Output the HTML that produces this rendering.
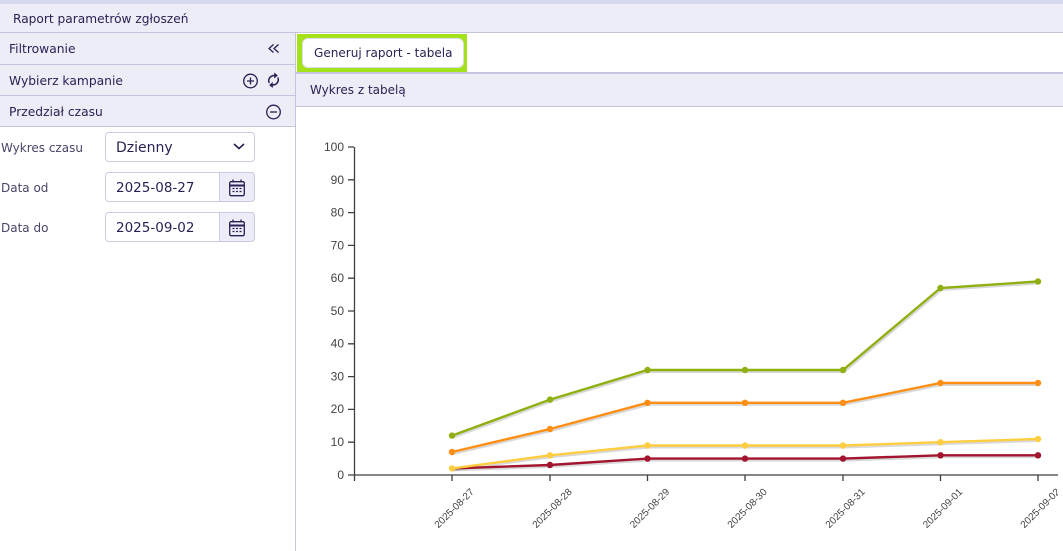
<!DOCTYPE html>
<html lang="pl"><head><meta charset="utf-8"><title>Raport</title>
<style>
html,body{margin:0;padding:0;background:#fff}
body{width:1063px;height:551px;position:relative;overflow:hidden;font-family:"DejaVu Sans","Liberation Sans",sans-serif;color:#2a1f52}
.a{position:absolute;box-sizing:border-box}
.t{position:absolute;white-space:nowrap;font-size:12.3px;line-height:16px}
.bar{background:#ecedf7;border-bottom:1px solid #c5c6de}
.lbl{color:#4a4468;font-size:12px}
.inp{background:#fff;border:1px solid #c9cae3;border-radius:4px}
.cal{background:#ecedf9;border:1px solid #c9cae3;border-left:1px solid #c9cae3;border-radius:0 4px 4px 0}
svg{position:absolute;overflow:visible}
</style></head><body>
<div class="a" style="left:0;top:0;width:1063px;height:4px;background:#d6d8ee"></div>
<div class="a bar" style="left:0;top:4px;width:1063px;height:29px"></div>
<div class="t" style="left:13px;top:11px;font-size:12.2px">Raport parametrów zgłoszeń</div>

<div class="a bar" style="left:0;top:33px;width:296px;height:32px"></div>
<div class="t" style="left:9px;top:41px">Filtrowanie</div>
<div class="a bar" style="left:0;top:65px;width:296px;height:31px"></div>
<div class="t" style="left:9px;top:73px">Wybierz kampanie</div>
<div class="a bar" style="left:0;top:96px;width:296px;height:31px"></div>
<div class="t" style="left:9px;top:104px">Przedział czasu</div>
<div class="a" style="left:295px;top:33px;width:1px;height:518px;background:#c5c6de"></div>

<svg style="left:0;top:0" width="296" height="130" fill="none" stroke="#2a1f52" stroke-width="1.3">
<path d="M273.5 44.5l-4.500 4 4.500 4M278.500 44.500l-4.500 4 4.500 4"/>
<circle cx="250.500" cy="81" r="6.800"/><path d="M250.500 77.500v7M247 81h7"/>
<circle cx="273.500" cy="112" r="6.800"/><path d="M270 112h7"/>
<path stroke-width="1.500" d="M269.200 83C267.500 79 270.500 75.500 274.500 75.500M277.800 77.500C279.500 81.500 276.500 85 272.500 85"/>
<path d="M274.200 72.500l3.600 3-3.600 3zM272.800 82l-3.600 3 3.600 3z" fill="#2a1f52" stroke="none"/>
</svg>

<div class="t lbl" style="left:1px;top:140px">Wykres czasu</div>
<div class="t lbl" style="left:1px;top:180px">Data od</div>
<div class="t lbl" style="left:1px;top:220px">Data do</div>

<div class="a inp" style="left:105px;top:132px;width:150px;height:30px"></div>
<div class="t" style="left:116px;top:140px;font-size:14px;line-height:17px">Dzienny</div>
<svg style="left:0;top:0" width="260" height="170" fill="none" stroke="#2a1f52" stroke-width="1.600"><path d="M234 144l5 4.500 5-4.500"/></svg>

<div class="a inp" style="left:105px;top:172px;width:150px;height:30px"></div>
<div class="a cal" style="left:219px;top:172px;width:36px;height:30px"></div>
<div class="t" style="left:116px;top:180px;font-size:13.500px">2025-08-27</div>
<div class="a inp" style="left:105px;top:212px;width:150px;height:30px"></div>
<div class="a cal" style="left:219px;top:212px;width:36px;height:30px"></div>
<div class="t" style="left:116px;top:220px;font-size:13.500px">2025-09-02</div>

<svg style="left:229px;top:179px" width="16" height="18" fill="none" stroke="#2a1f52" stroke-width="1.300">
<rect x=".7" y="2.700" width="14.600" height="14" rx="1.500"/><path d="M.7 6.500h14.600" stroke-width="2"/><path d="M4 .5v3M12 .5v3"/>
<path d="M3.500 9.500h2M7 9.500h2M10.500 9.500h2M3.500 12.500h2M7 12.500h2M10.500 12.500h2" stroke-width="1.200"/></svg>
<svg style="left:229px;top:219px" width="16" height="18" fill="none" stroke="#2a1f52" stroke-width="1.300">
<rect x=".7" y="2.700" width="14.600" height="14" rx="1.500"/><path d="M.7 6.500h14.600" stroke-width="2"/><path d="M4 .5v3M12 .5v3"/>
<path d="M3.500 9.500h2M7 9.500h2M10.500 9.500h2M3.500 12.500h2M7 12.500h2M10.500 12.500h2" stroke-width="1.200"/></svg>

<div class="a" style="left:296px;top:32px;width:767px;height:1px;background:#c5c6de"></div>
<div class="a" style="left:297px;top:34px;width:170px;height:38px;background:#a4e31c"></div>
<div class="a" style="left:302px;top:38px;width:162px;height:30px;background:#fff;border:1px solid #dcdcea;border-radius:6px"></div>
<div class="t" style="left:314px;top:45px;font-size:12.050px">Generuj raport - tabela</div>
<div class="a" style="left:296px;top:72px;width:767px;height:35px;background:#ecedf7;border-top:2px solid #c5c6de;border-bottom:1px solid #c5c6de"></div>
<div class="t" style="left:310px;top:82px;font-size:12px">Wykres z tabelą</div>

<svg style="left:0;top:0;overflow:hidden" width="1058" height="551" fill="none">
<g stroke="#3f3f3f" stroke-width="1.300">
<path d="M354.500 147v334M1063 475H354.500"/>
<path d="M348 147h6M348 179.800h6M348 212.600h6M348 245.400h6M348 278.200h6M348 311h6M348 343.800h6M348 376.600h6M348 409.400h6M348 442.200h6M348 475h6"/>
<path d="M452 475v6M550 475v6M647.500 475v6M745 475v6M843 475v6M940.500 475v6M1038 475v6"/>
</g>
<g font-family="Liberation Sans,Arial,sans-serif" font-size="12" fill="#444" text-anchor="end" stroke="none">
<text x="344" y="151">100</text><text x="344" y="184">90</text><text x="344" y="216.500">80</text><text x="344" y="249.500">70</text><text x="344" y="282">60</text><text x="344" y="315">50</text><text x="344" y="347.500">40</text><text x="344" y="380.500">30</text><text x="344" y="413">20</text><text x="344" y="446">10</text><text x="344" y="479">0</text>
</g>
<g font-family="Liberation Sans,Arial,sans-serif" font-size="10" fill="#444" text-anchor="end" stroke="none">
<text transform="translate(474.500,492.500) rotate(-45)">2025-08-27</text>
<text transform="translate(572.500,492.500) rotate(-45)">2025-08-28</text>
<text transform="translate(670,492.500) rotate(-45)">2025-08-29</text>
<text transform="translate(767.500,492.500) rotate(-45)">2025-08-30</text>
<text transform="translate(865.500,492.500) rotate(-45)">2025-08-31</text>
<text transform="translate(963,492.500) rotate(-45)">2025-09-01</text>
<text transform="translate(1060.500,492.500) rotate(-45)">2025-09-02</text>
</g>
<g stroke="#000" stroke-opacity=".15" stroke-width="3" transform="translate(1 1.500)">
<path d="M452 435.600L550 399.600 647.500 370H843L940.500 288 1038 281.500"/>
<path d="M452 452L550 429 647.500 402.800H843L940.500 383H1038"/>
<path d="M452 468.400L550 455.300 647.500 445.500H843L940.500 442.200 1038 439"/>
<path d="M452 468.400L550 465 647.500 458.600H843L940.500 455.300H1038"/>
</g>
<g stroke-width="2.400">
<path stroke="#8fb010" d="M452 435.600L550 399.600 647.500 370H843L940.500 288 1038 281.500"/>
<path stroke="#ff8f14" d="M452 452L550 429 647.500 402.800H843L940.500 383H1038"/>
<path stroke="#a3152e" d="M452 468.400L550 465 647.500 458.600H843L940.500 455.300H1038"/>
<path stroke="#ffcd40" d="M452 468.400L550 455.300 647.500 445.500H843L940.500 442.200 1038 439"/>
</g>
<g fill="#8fb010"><circle cx="452" cy="435.600" r="3.200"/><circle cx="550" cy="399.600" r="3.200"/><circle cx="647.500" cy="370" r="3.200"/><circle cx="745" cy="370" r="3.200"/><circle cx="843" cy="370" r="3.200"/><circle cx="940.500" cy="288" r="3.200"/><circle cx="1038" cy="281.500" r="3.200"/></g>
<g fill="#ff8f14"><circle cx="452" cy="452" r="3.200"/><circle cx="550" cy="429" r="3.200"/><circle cx="647.500" cy="402.800" r="3.200"/><circle cx="745" cy="402.800" r="3.200"/><circle cx="843" cy="402.800" r="3.200"/><circle cx="940.500" cy="383" r="3.200"/><circle cx="1038" cy="383" r="3.200"/></g>
<g fill="#a3152e"><circle cx="550" cy="465" r="3.200"/><circle cx="647.500" cy="458.600" r="3.200"/><circle cx="745" cy="458.600" r="3.200"/><circle cx="843" cy="458.600" r="3.200"/><circle cx="940.500" cy="455.300" r="3.200"/><circle cx="1038" cy="455.300" r="3.200"/></g>
<g fill="#ffcd40"><circle cx="452" cy="468.400" r="3.200"/><circle cx="550" cy="455.300" r="3.200"/><circle cx="647.500" cy="445.500" r="3.200"/><circle cx="745" cy="445.500" r="3.200"/><circle cx="843" cy="445.500" r="3.200"/><circle cx="940.500" cy="442.200" r="3.200"/><circle cx="1038" cy="439" r="3.200"/></g>
</svg>
</body></html>
